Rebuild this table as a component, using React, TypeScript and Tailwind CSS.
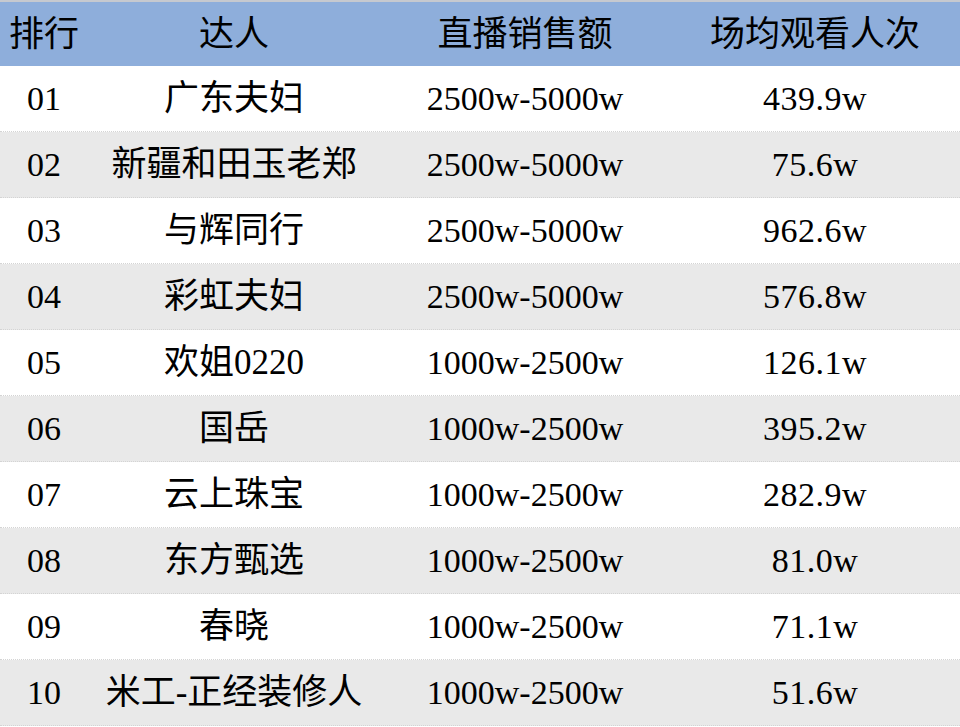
import React from "react";

const rows = [
  { rank: "01", name: "广东夫妇", sales: "2500w-5000w", views: "439.9w" },
  { rank: "02", name: "新疆和田玉老郑", sales: "2500w-5000w", views: "75.6w" },
  { rank: "03", name: "与辉同行", sales: "2500w-5000w", views: "962.6w" },
  { rank: "04", name: "彩虹夫妇", sales: "2500w-5000w", views: "576.8w" },
  { rank: "05", name: "欢姐0220", sales: "1000w-2500w", views: "126.1w" },
  { rank: "06", name: "国岳", sales: "1000w-2500w", views: "395.2w" },
  { rank: "07", name: "云上珠宝", sales: "1000w-2500w", views: "282.9w" },
  { rank: "08", name: "东方甄选", sales: "1000w-2500w", views: "81.0w" },
  { rank: "09", name: "春晓", sales: "1000w-2500w", views: "71.1w" },
  { rank: "10", name: "米工-正经装修人", sales: "1000w-2500w", views: "51.6w" },
];

const cols = "grid grid-cols-[88px_292px_290px_290px] items-center";

export default function App() {
  return (
    <div
      className="w-[960px] h-[727px] bg-white text-black text-[34px] leading-none"
      style={{ fontFamily: '"Liberation Serif", "Noto Sans CJK SC", serif' }}
    >
      {/* 表头 */}
      <div className={`${cols} h-[66px] bg-[#8eaedb] border-t-2 border-[#c6c9cf] text-[35px]`}>
        <div className="text-center">排行</div>
        <div className="text-center">达人</div>
        <div className="text-center">直播销售额</div>
        <div className="text-center">场均观看人次</div>
      </div>

      {rows.map((r, i) => (
        <div
          key={r.rank}
          className={`${cols} h-[66px] border-b border-dotted border-[#d4d4d4] ${
            i % 2 === 1 ? "bg-[#e9e9e9]" : "bg-white"
          }`}
        >
          <div className="text-center">{r.rank}</div>
          <div className="text-center whitespace-nowrap text-[35px]">{r.name}</div>
          <div className="text-center">{r.sales}</div>
          <div className="text-center tracking-[0.5px]">{r.views}</div>
        </div>
      ))}
    </div>
  );
}
